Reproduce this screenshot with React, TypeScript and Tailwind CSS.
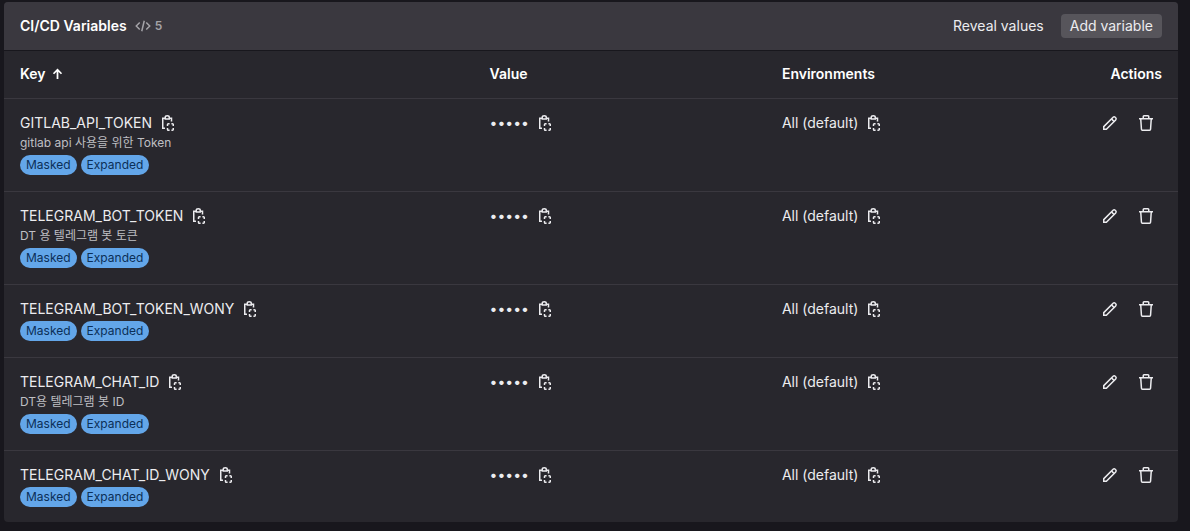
import type { ReactNode } from 'react';

type Variable = { key: string; description?: string };

const variables: Variable[] = [
  { key: 'GITLAB_API_TOKEN', description: 'gitlab api 사용을 위한 Token' },
  { key: 'TELEGRAM_BOT_TOKEN', description: 'DT 용 텔레그램 봇 토큰' },
  { key: 'TELEGRAM_BOT_TOKEN_WONY' },
  { key: 'TELEGRAM_CHAT_ID', description: 'DT용 텔레그램 봇 ID' },
  { key: 'TELEGRAM_CHAT_ID_WONY' },
];

function Icon({ children }: { children: ReactNode }) {
  return (
    <svg
      viewBox="0 0 16 16"
      className="block size-4 shrink-0"
      fill="none"
      stroke="currentColor"
      strokeWidth="1.5"
      aria-hidden="true"
    >
      {children}
    </svg>
  );
}

function CopyIcon() {
  return (
    <Icon>
      <path d="M5 13.25H2.75v-10H5M9.5 3.25h2V6.5" />
      <path d="M5.25 4V2.25a2 1.5 0 0 1 4 0V4z" />
      <path d="M9.6 8.75H8.25a.75.75 0 0 0-.75.75v1.5M11.4 8.75h1.1a.75.75 0 0 1 .75.75v1.5M9.6 15.25H8.25a.75.75 0 0 1-.75-.75v-1.5M11.4 15.25h1.1a.75.75 0 0 0 .75-.75v-1.5" />
    </Icon>
  );
}

function PencilIcon() {
  return (
    <Icon>
      <path d="M1.75 14.25v-2.6L11.1 2.3a1.5 1.5 0 0 1 2.1 0l.5.5a1.5 1.5 0 0 1 0 2.1l-9.35 9.35z" />
      <path d="M9.5 3.9l2.6 2.6" />
    </Icon>
  );
}

function TrashIcon() {
  return (
    <Icon>
      <path d="M1 3.75h14M5.25 3.5V1.5a.75.75 0 0 1 .75-.75h4a.75.75 0 0 1 .75.75v2M2.75 4l.7 10.3a1 1 0 0 0 1 .95h7.1a1 1 0 0 0 1-.95L13.25 4" />
    </Icon>
  );
}

function CopyButton({ label }: { label: string }) {
  return (
    <button type="button" aria-label={label} className="cursor-pointer">
      <CopyIcon />
    </button>
  );
}

function Badge({ children }: { children: ReactNode }) {
  return (
    <span className="rounded-full bg-[#63a6e9] px-1.5 text-xs leading-5 text-[#0b2f57]">{children}</span>
  );
}

export default function App() {
  return (
    <main className="min-h-screen bg-[#18171d] pt-0.5 pr-3 pb-2 pl-1 font-[Inter,'Noto_Sans_CJK_KR',sans-serif] text-sm leading-4 text-[#ececef]">
      <section className="overflow-hidden rounded bg-[#28272d]">
        <header className="flex items-center justify-between border-b border-[#18171d] bg-[#3a383f] px-4 py-3">
          <div className="flex items-center gap-2">
            <h2 className="font-semibold text-white">CI/CD Variables</h2>
            <span className="flex items-center gap-1 text-xs font-semibold text-[#a4a3a8]">
              <Icon>
                <path d="M4.75 4.5L1.25 8l3.5 3.5M11.25 4.5l3.5 3.5-3.5 3.5M9.25 2.75l-2.5 10.5" />
              </Icon>
              5
            </span>
          </div>
          <div className="flex items-center gap-2">
            <button type="button" className="h-6 cursor-pointer rounded px-[9px]">
              Reveal values
            </button>
            <button type="button" className="h-6 cursor-pointer rounded bg-[#57555b] px-[9px]">
              Add variable
            </button>
          </div>
        </header>
        <table className="w-full table-fixed border-separate border-spacing-0 text-left">
          <thead>
            <tr className="text-white *:border-b *:border-[#3a383f] *:px-4 *:pt-[15px] *:pb-4 *:font-semibold">
              <th scope="col" className="w-[40%]">
                <span className="flex items-center gap-1">
                  Key
                  <Icon>
                    <path d="M7.5 13V3.5M3.5 7.75l4-4 4 4" strokeWidth="1.75" />
                  </Icon>
                </span>
              </th>
              <th scope="col" className="w-[24.9%]">
                Value
              </th>
              <th scope="col">Environments</th>
              <th scope="col" className="w-28 text-right">
                Actions
              </th>
            </tr>
          </thead>
          <tbody>
            {variables.map((variable) => (
              <tr
                key={variable.key}
                className="*:border-b *:border-[#3a383f] *:px-4 *:py-4 *:align-top last:*:border-b-0 last:*:pb-[15px]"
              >
                <td>
                  <div className="flex flex-col gap-1">
                    <div className="flex items-center gap-2">
                      <span>{variable.key}</span>
                      <CopyButton label="Copy key" />
                    </div>
                    {variable.description && (
                      <p className="text-xs leading-4 text-[#bfbfc3]">{variable.description}</p>
                    )}
                    <div className="flex gap-1">
                      <Badge>Masked</Badge>
                      <Badge>Expanded</Badge>
                    </div>
                  </div>
                </td>
                <td>
                  <div className="flex items-center gap-2">
                    <span>•••••</span>
                    <CopyButton label="Copy value" />
                  </div>
                </td>
                <td>
                  <div className="flex items-center gap-2">
                    <span>All (default)</span>
                    <CopyButton label="Copy environment" />
                  </div>
                </td>
                <td>
                  <div className="flex justify-end gap-5 pr-2">
                    <button type="button" aria-label="Edit" className="cursor-pointer">
                      <PencilIcon />
                    </button>
                    <button type="button" aria-label="Delete" className="cursor-pointer">
                      <TrashIcon />
                    </button>
                  </div>
                </td>
              </tr>
            ))}
          </tbody>
        </table>
      </section>
    </main>
  );
}
